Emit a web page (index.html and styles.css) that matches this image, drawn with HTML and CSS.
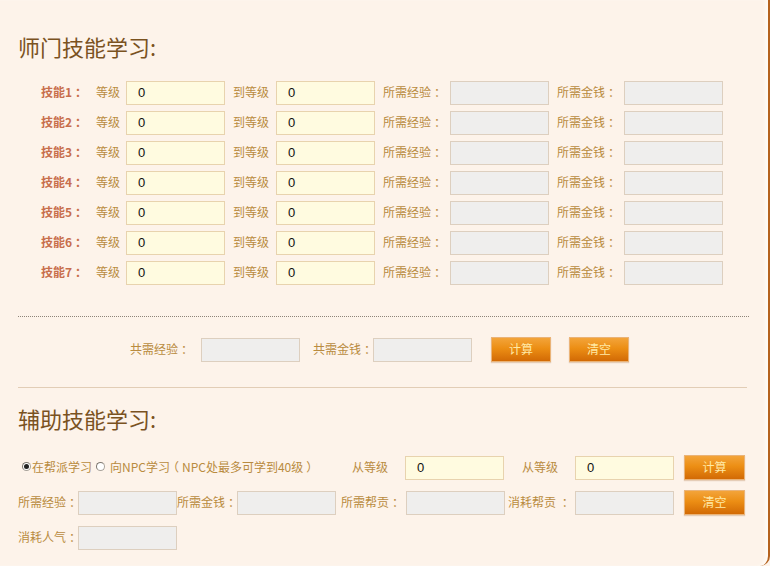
FILE: index.html
```html
<!DOCTYPE html>
<html lang="zh-CN">
<head>
<meta charset="utf-8">
<title>技能学习</title>
<link rel="stylesheet" href="styles.css">
</head>
<body>
<div class="page">
  <h2 class="title">师门技能学习:</h2>
  <div class="skills">
    <span class="skill">技能1<span class="c">：</span></span><span class="lbl">等级</span><span class="inp yel">0</span><span class="lbl pad">到等级</span><span class="inp yel">0</span><span class="lbl pad">所需经验<span class="c">：</span></span><span class="inp gray"></span><span class="lbl pad">所需金钱<span class="c">：</span></span><span class="inp gray"></span>
    <span class="skill">技能2<span class="c">：</span></span><span class="lbl">等级</span><span class="inp yel">0</span><span class="lbl pad">到等级</span><span class="inp yel">0</span><span class="lbl pad">所需经验<span class="c">：</span></span><span class="inp gray"></span><span class="lbl pad">所需金钱<span class="c">：</span></span><span class="inp gray"></span>
    <span class="skill">技能3<span class="c">：</span></span><span class="lbl">等级</span><span class="inp yel">0</span><span class="lbl pad">到等级</span><span class="inp yel">0</span><span class="lbl pad">所需经验<span class="c">：</span></span><span class="inp gray"></span><span class="lbl pad">所需金钱<span class="c">：</span></span><span class="inp gray"></span>
    <span class="skill">技能4<span class="c">：</span></span><span class="lbl">等级</span><span class="inp yel">0</span><span class="lbl pad">到等级</span><span class="inp yel">0</span><span class="lbl pad">所需经验<span class="c">：</span></span><span class="inp gray"></span><span class="lbl pad">所需金钱<span class="c">：</span></span><span class="inp gray"></span>
    <span class="skill">技能5<span class="c">：</span></span><span class="lbl">等级</span><span class="inp yel">0</span><span class="lbl pad">到等级</span><span class="inp yel">0</span><span class="lbl pad">所需经验<span class="c">：</span></span><span class="inp gray"></span><span class="lbl pad">所需金钱<span class="c">：</span></span><span class="inp gray"></span>
    <span class="skill">技能6<span class="c">：</span></span><span class="lbl">等级</span><span class="inp yel">0</span><span class="lbl pad">到等级</span><span class="inp yel">0</span><span class="lbl pad">所需经验<span class="c">：</span></span><span class="inp gray"></span><span class="lbl pad">所需金钱<span class="c">：</span></span><span class="inp gray"></span>
    <span class="skill">技能7<span class="c">：</span></span><span class="lbl">等级</span><span class="inp yel">0</span><span class="lbl pad">到等级</span><span class="inp yel">0</span><span class="lbl pad">所需经验<span class="c">：</span></span><span class="inp gray"></span><span class="lbl pad">所需金钱<span class="c">：</span></span><span class="inp gray"></span>
  </div>
  <div class="dotted"></div>
  <div class="summary">
    <span class="lbl w71">共需经验<span class="c">：</span></span><span class="inp gray"></span>
    <span class="lbl w60 ml13">共需金钱<span class="c">：</span></span><span class="inp gray"></span>
    <span class="btn ml19">计算</span>
    <span class="btn ml18">清空</span>
  </div>
  <div class="solid"></div>
  <h2 class="title t2">辅助技能学习:</h2>
  <div class="row r1">
    <span class="radios">
      <span class="radio on"></span><span class="lbl">在帮派学习</span>
      <span class="radio"></span><span class="lbl">向NPC学习<span class="c">（</span>NPC处最多可学到40级<span class="c">）</span></span>
    </span>
    <span class="lbl w53">从等级</span><span class="inp yel">0</span>
    <span class="lbl w71 pl18">从等级</span><span class="inp yel">0</span>
    <span class="btn ml10 w61">计算</span>
  </div>
  <div class="row">
    <span class="lbl w60">所需经验<span class="c">：</span></span><span class="inp gray"></span>
    <span class="lbl w60">所需金钱<span class="c">：</span></span><span class="inp gray"></span>
    <span class="lbl w65 ml5">所需帮贡<span class="c">：</span></span><span class="inp gray"></span>
    <span class="lbl w67 ml3">消耗帮贡 <span class="c">：</span></span><span class="inp gray"></span>
    <span class="btn ml10 w61">清空</span>
  </div>
  <div class="row">
    <span class="lbl w60">消耗人气<span class="c">：</span></span><span class="inp gray"></span>
  </div>
</div>
</body>
</html>
```

FILE: styles.css
```css
html, body {
  margin: 0;
  padding: 0;
  background: #fdf3ea;
}
.page {
  box-sizing: border-box;
  width: 770px;
  height: 566px;
  overflow: hidden;
  padding: 31px 0 0 18px;
  background: #fdf3ea;
  border-right: 2px solid #b5621e;
  border-bottom-right-radius: 10px;
  box-shadow: inset -4px 0 3px -1px #fffaf4;
  font-family: "Noto Sans CJK SC", "Microsoft YaHei", sans-serif;
  font-size: 12px;
  color: #b98b40;
}
.c {
  display: inline-block;
  width: 1em;
  text-align: center;
  font-feature-settings: "halt";
}
.title {
  margin: 0;
  font-size: 22px;
  line-height: 30px;
  height: 30px;
  font-weight: normal;
  color: #7a521f;
}
.skills {
  margin-top: 20px;
  padding-left: 23px;
  display: grid;
  grid-template-columns: 55px 30px 99px 51px 99px 75px 99px 75px 99px;
  grid-auto-rows: 24px;
  row-gap: 6px;
  align-items: center;
}
.skill {
  color: #c86e4c;
  font-weight: bold;
  padding-bottom: 3px;
}
.lbl {
  white-space: nowrap;
  padding-bottom: 3px;
  box-sizing: border-box;
}
.pad { padding-left: 8px; }
.inp {
  box-sizing: border-box;
  width: 99px;
  height: 24px;
  line-height: 22px;
  padding-left: 11px;
  font-family: "Liberation Sans", Arial, sans-serif;
  font-size: 13px;
  color: #111;
  flex: none;
}
.yel {
  background: #fffbe0;
  border: 1px solid #e8d3ae;
}
.gray {
  background: #efeeed;
  border: 1px solid #ddcfbf;
}
.dotted {
  width: 731px;
  margin-top: 31px;
  border-top: 1px dotted #8d8479;
}
.solid {
  width: 729px;
  margin-top: 25px;
  border-top: 1px solid #e2cdb6;
}
.summary {
  margin-top: 20px;
  padding-left: 112px;
  display: flex;
  align-items: center;
  height: 25px;
}
.btn {
  box-sizing: border-box;
  width: 60px;
  height: 25px;
  line-height: 22px;
  text-align: center;
  color: #ffe9a6;
  background: linear-gradient(#f3a43a 0%, #ec8e14 45%, #d26a05 100%);
  border: 1px solid #eab377;
  box-shadow: 0 1px 1px rgba(160, 90, 30, 0.25);
  flex: none;
}
.t2 { margin-top: 15px; }
.row {
  display: flex;
  align-items: center;
  height: 25px;
  margin-top: 10px;
}
.r1 { margin-top: 22px; }
.radios {
  width: 334px;
  display: flex;
  align-items: center;
  flex: none;
}
.radio {
  box-sizing: border-box;
  width: 9px;
  height: 9px;
  border-radius: 50%;
  border: 1px solid #a8a29a;
  border-top-color: #7e7870;
  border-left-color: #7e7870;
  background: #fff;
  margin: 0 1px 2px 4px;
  position: relative;
  flex: none;
}
.radio.on::after {
  content: "";
  position: absolute;
  left: 1px;
  top: 1px;
  width: 5px;
  height: 5px;
  border-radius: 50%;
  background: #222;
}
.radios .lbl + .radio { margin-left: 4px; margin-right: 5px; }
.w53 { width: 53px; flex: none; }
.w60 { width: 60px; flex: none; }
.w65 { width: 65px; flex: none; }
.w67 { width: 67px; flex: none; }
.w71 { width: 71px; flex: none; }
.w61 { width: 61px; }
.pl18 { padding-left: 18px; }
.ml3 { margin-left: 3px; }
.ml5 { margin-left: 5px; }
.ml10 { margin-left: 10px; }
.ml13 { margin-left: 13px; }
.ml18 { margin-left: 18px; }
.ml19 { margin-left: 19px; }
```
